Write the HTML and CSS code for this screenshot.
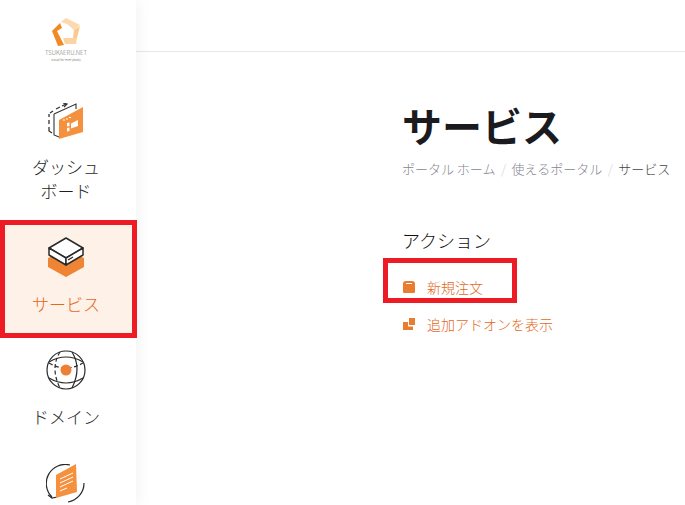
FILE: index.html
```html
<!DOCTYPE html>
<html lang="ja">
  <head>
    <meta charset="UTF-8" />
    <title>サービス</title>
    <link rel="stylesheet" href="styles.css">
  </head>
  <body>
    <aside class="sidebar">
      <div class="logo">
        <svg width="29" height="29" viewBox="0 0 29 29">
          <polygon points="9,4 14,0 28,7 22,12 15,6" fill="#fcd9ae"/>
          <polygon points="28,8 25,20 21,20 22,12" fill="#fbc98d"/>
          <polygon points="11,20 25,20 24,26 13,26" fill="#fcd3a2"/>
          <polygon points="0,13 8,5 10,10 5,13 12,27 6,28" fill="#f08a24"/>
        </svg>
        <div class="logo-name">TSUKAERU.NET</div>
        <div class="logo-tag">cloud for everybody</div>
      </div>
      <nav class="nav">
        <a class="nav-item nav-dash">
          <svg width="36" height="37" viewBox="0 0 36 37">
            <path d="M1 11 V14 M1 17 V21 M1 24 V28 L4 30 M2 10 L5 8 M8 6 L12 4 M14 3 L18 1" fill="none" stroke="#333" stroke-width="1.3"/>
            <path d="M15 0 L19 1 L16 4" fill="none" stroke="#333" stroke-width="1.2"/>
            <path d="M6 11 L28 1 V6 M6 11 V32 L11 34" fill="none" stroke="#333" stroke-width="1.1"/>
            <polygon points="11,17 35,4 35,29 11,36" fill="#f5913e"/>
            <path d="M15 17 h2 M18 16 h2 M21 14.5 h2" stroke="#fff" stroke-width="1"/>
            <polygon points="23,20.5 30,17 30,23 23,25.5" fill="#fff"/>
            <polygon points="19,20 21.5,19.5 21.5,23 19,23.5" fill="#fff"/>
            <polygon points="19,25 21.5,24.5 21.5,28 19,28.5" fill="#fff"/>
          </svg>
          <span class="nav-label">ダッシュ<br>ボード</span>
        </a>
        <a class="nav-item nav-service">
          <svg width="36" height="40" viewBox="0 0 36 40">
            <polygon points="0,21 5,19 18,27 31,19 36,21 36,30 18,40 0,30" fill="#ef8434"/>
            <polygon points="18,1 35,11 18,21 1,11" fill="#fff" stroke="#2a2a2a" stroke-width="1.5" stroke-linejoin="round"/>
            <polygon points="1,11 18,21 18,28 1,18" fill="#fff" stroke="#2a2a2a" stroke-width="1.5" stroke-linejoin="round"/>
            <polygon points="35,11 18,21 18,28 35,18" fill="#fff" stroke="#2a2a2a" stroke-width="1.5" stroke-linejoin="round"/>
            <path d="M20 23 L25 20" stroke="#2a2a2a" stroke-width="1.4"/>
          </svg>
          <span class="nav-label">サービス</span>
        </a>
        <a class="nav-item nav-domain">
          <svg width="40" height="40" viewBox="0 0 40 40">
            <g fill="none" stroke="#2a2a2a" stroke-width="1.2">
              <circle cx="20" cy="20" r="19"/>
              <path d="M3 12 Q20 2 37 12"/>
              <path d="M3 28 Q20 38 37 28"/>
              <path d="M26 2 Q36 18 26 38"/>
              <path d="M3 13 Q20 23 37 13" stroke-dasharray="4 2.5"/>
              <path d="M14 2 Q4 18 14 38" stroke-dasharray="4 2.5"/>
            </g>
            <circle cx="20" cy="20" r="5.5" fill="#ed8034"/>
          </svg>
          <span class="nav-label">ドメイン</span>
        </a>
        <a class="nav-item nav-renew">
          <svg width="40" height="40" viewBox="0 0 40 40">
            <g fill="none" stroke="#2a2a2a" stroke-width="1.2">
              <path d="M24 1 A19 19 0 0 0 6 33"/>
              <path d="M38 19 A19 19 0 0 1 22 38"/>
              <path d="M2 31 L6 34 L11 33"/>
            </g>
            <polygon points="10,11 30,0 31,28 10,34" fill="#f5913e"/>
            <path d="M14 15 L27 9 M14 19 L27 13 M14 23 L27 17 M14 27 L21 24" stroke="#fff" stroke-width="1"/>
          </svg>
        </a>
      </nav>
    </aside>

    <div class="main">
      <div class="topbar"></div>
      <div class="content">
        <h1>サービス</h1>
        <div class="breadcrumb">
          <a>ポータル ホーム</a><span class="sep">/</span><a>使えるポータル</a><span class="sep">/</span><span class="current">サービス</span>
        </div>
        <h2>アクション</h2>
        <a class="action action-new">
          <svg width="12" height="12" viewBox="0 0 12 12"><path d="M3 0 H9 Q12 0 12 3 V11 Q12 12 11 12 H1 Q0 12 0 11 V3 Q0 0 3 0 Z M3 2 V3 H9 V2 Z" fill="#e97c30" fill-rule="evenodd"/></svg>
          新規注文
        </a>
        <a class="action action-addon">
          <svg width="12" height="12" viewBox="0 0 12 12"><path d="M0 4 H5 V8.5 H10 V12 H0 Z M6 0 H12 V7 H6 Z" fill="#e97c30"/></svg>
          追加アドオンを表示
        </a>
      </div>
    </div>
  </body>
</html>
```

FILE: styles.css
```css
body {
  margin: 0;
  display: flex;
  height: 505px;
  overflow: hidden;
  background-color: white;
  font-family: "Noto Sans CJK JP", "Open Sans", sans-serif;
  font-weight: 300;
  color: #333;
}

.sidebar {
  width: 136px;
  flex-shrink: 0;
  background-color: white;
  box-shadow: 0 0 16px rgba(0, 0, 0, 0.07);
  z-index: 1;
}

.logo {
  width: 132px;
  height: 83px;
  padding-top: 18px;
  box-sizing: border-box;
  text-align: center;
}

.logo svg {
  display: block;
  margin: 0 auto 2px;
}

.logo-name {
  font-size: 6px;
  line-height: 8px;
  color: #777;
}

.logo-tag {
  font-size: 3.3px;
  line-height: 5px;
  color: #666;
}

.nav-item {
  display: flex;
  flex-direction: column;
  align-items: center;
  text-align: center;
  box-sizing: border-box;
  padding-right: 4px;
  font-size: 17px;
  line-height: 24px;
  color: #1f1f1f;
}

.nav-dash {
  height: 137px;
  padding-top: 20px;
}

.nav-dash .nav-label {
  margin-top: 15px;
}

.nav-service {
  width: 137px;
  height: 118px;
  padding-top: 12px;
  padding-right: 5px;
  background-color: #fef1e7;
  border: 5px solid #ed1c24;
  color: #e2681c;
}

.nav-service .nav-label {
  margin-top: 15px;
}

.nav-domain {
  height: 113px;
  padding-top: 12px;
}

.nav-domain .nav-label {
  margin-top: 15px;
}

.nav-renew {
  padding-top: 13px;
}

.main {
  flex: 1;
  min-width: 0;
}

.topbar {
  height: 51px;
  border-bottom: 1px solid #e8e8e8;
}

.content {
  padding: 43px 0 0 266px;
}

h1 {
  margin: 0;
  font-size: 40px;
  line-height: 60px;
  font-weight: bold;
  color: #1b1b1f;
  white-space: nowrap;
}

.breadcrumb {
  margin-top: 4px;
  font-size: 13px;
  line-height: 20px;
  color: #85858f;
  white-space: nowrap;
}

.sep {
  margin: 0 5.5px;
  color: #d5d5d8;
}

.current {
  color: #444;
}

h2 {
  margin: 48px 0 0;
  font-size: 18px;
  font-weight: 300;
  line-height: 26px;
  color: #111;
}

.action {
  display: flex;
  align-items: center;
  gap: 12px;
  font-size: 14px;
  line-height: 20px;
  color: #e2681c;
  white-space: nowrap;
}

.action-new {
  width: 134px;
  height: 45px;
  box-sizing: border-box;
  margin: 5px 0 11px -19px;
  padding: 13px 0 0 15px;
  border: 5px solid #ed1c24;
}

.action-addon {
  padding-left: 1px;
}

.action svg {
  flex-shrink: 0;
}
```
